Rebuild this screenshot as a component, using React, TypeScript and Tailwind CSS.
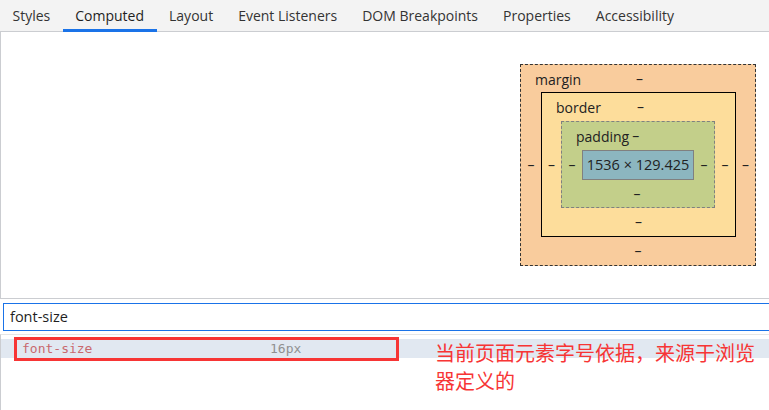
import { useState } from "react";

const tabs = [
  "Styles",
  "Computed",
  "Layout",
  "Event Listeners",
  "DOM Breakpoints",
  "Properties",
  "Accessibility",
];

function Dash({ className = "" }: { className?: string }) {
  return <span className={`text-[14px] leading-none ${className}`}>–</span>;
}

function BoxModel() {
  return (
    <div className="w-[236px] h-[202px] border border-dashed border-[#333] bg-[#f9cc9d] flex flex-col text-[#222]">
      <div className="flex h-[27px] items-center pt-[1px]">
        <span className="pl-[14px] w-[115px] text-[14px]">margin</span>
        <Dash />
      </div>
      <div className="flex flex-1 items-center">
        <Dash className="w-[20px] text-center" />
        <div className="w-[195px] h-[145px] border border-black bg-[#fddd9b] flex flex-col">
          <div className="flex h-[28px] items-center">
            <span className="pl-[14px] w-[95px] text-[14px]">border</span>
            <Dash />
          </div>
          <div className="flex flex-1 items-center">
            <Dash className="w-[19px] text-center" />
            <div className="w-[154px] h-[87px] border border-dashed border-[#808080] bg-[#c3cf8a] flex flex-col">
              <div className="flex h-[28px] items-center">
                <span className="pl-[14px] text-[14px]">padding</span>
                <Dash className="ml-[3px]" />
              </div>
              <div className="flex items-center">
                <Dash className="w-[20px] text-center" />
                <div className="w-[112px] h-[30px] border border-[#808080] bg-[#8cb6c0] flex items-center justify-center text-[14.5px]">
                  1536 × 129.425
                </div>
                <Dash className="w-[20px] text-center" />
              </div>
              <div className="flex flex-1 items-center justify-center pr-[2px]">
                <Dash />
              </div>
            </div>
            <Dash className="w-[20px] text-center" />
          </div>
          <div className="flex h-[28px] items-center justify-center pb-[1px]">
            <Dash />
          </div>
        </div>
        <Dash className="w-[19px] text-center" />
      </div>
      <div className="flex h-[28px] items-center justify-center">
        <Dash />
      </div>
    </div>
  );
}

export default function App() {
  const [active, setActive] = useState(1);
  const [filter, setFilter] = useState("font-size");

  return (
    <div
      className="w-[769px] h-[410px] bg-white overflow-hidden flex flex-col"
      style={{ fontFamily: '"Open Sans", "Noto Sans", sans-serif' }}
    >
      {/* Tab bar */}
      <div className="h-[32px] bg-[#f3f3f3] border-b border-[#cbcdd1] flex items-stretch">
        {tabs.map((t, i) => (
          <button
            key={t}
            onClick={() => setActive(i)}
            className={`px-[12.5px] text-[14px] flex items-center border-b-[3px] mb-[-1px] pt-[1px] ${
              i === active
                ? "border-[#1a73e8] text-[#1f1f1f]"
                : "border-transparent text-[#333]"
            }`}
          >
            {t}
          </button>
        ))}
      </div>

      {/* Box model area */}
      <div className="h-[266px] border-l border-[#cbcdd1] flex justify-end pr-[13px] pt-[32px]">
        <BoxModel />
      </div>

      {/* Filter */}
      <div className="border-t border-[#cbcdd1] pt-[4px] pl-[3px]">
        <div className="h-[28px] border border-r-0 border-[#1a73e8] flex items-center pl-[6px]">
          <input
            value={filter}
            onChange={(e) => setFilter(e.target.value)}
            className="outline-none text-[14.5px] text-[#1f1f1f] w-full bg-transparent"
          />
        </div>
      </div>

      {/* Property row + note */}
      <div className="border-t border-[#e6e6e6] mt-[3px] pt-[4px] border-l border-l-[#cbcdd1] relative flex-1">
        <div className="h-[19px] bg-[#e1e8f1] flex items-center">
          <div className="ml-[13px] w-[385px] h-[24px] border-[3px] border-[#f73535] flex items-center pl-[5px]">
            <span
              className="text-[13px] text-[#c9686e] w-[248px]"
              style={{ fontFamily: '"DejaVu Sans Mono", "Liberation Mono", monospace' }}
            >
              font-size
            </span>
            <span
              className="text-[13px] text-[#909090]"
              style={{ fontFamily: '"DejaVu Sans Mono", "Liberation Mono", monospace' }}
            >
              16px
            </span>
          </div>
        </div>
        <p
          className="absolute left-[434px] top-[4px] w-[330px] text-[20px] leading-[28px] text-[#f73535]"
          style={{ fontFamily: '"Noto Sans CJK SC", sans-serif' }}
        >
          当前页面元素字号依据，来源于浏览器定义的
        </p>
      </div>
    </div>
  );
}
